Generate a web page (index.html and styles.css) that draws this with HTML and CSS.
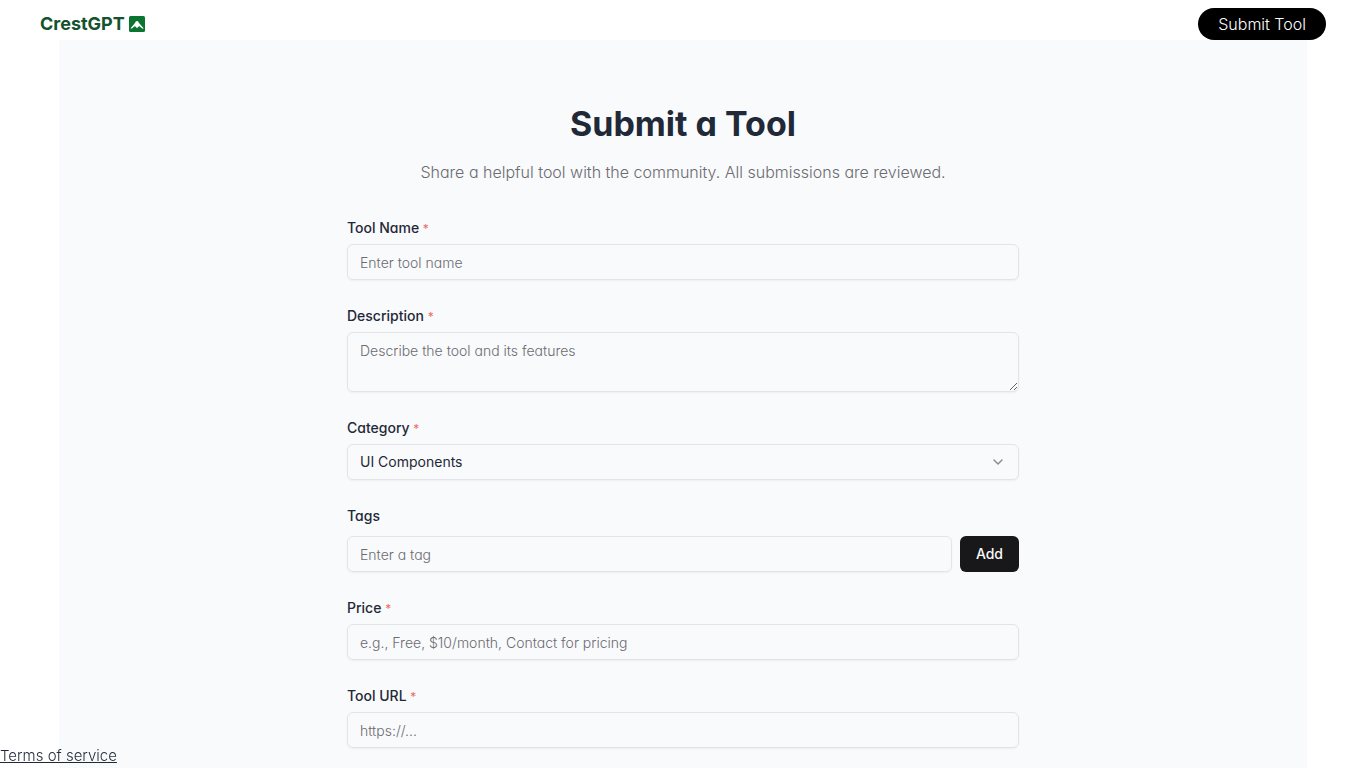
FILE: index.html
```html
<!DOCTYPE html>
<html lang="en">
<head>
<meta charset="utf-8">
<meta name="viewport" content="width=device-width, initial-scale=1">
<title>Submit a Tool - CrestGPT</title>
<link rel="stylesheet" href="styles.css">
</head>
<body>
<header class="site-header">
  <a class="brand" href="#">
    <span>CrestGPT</span>
    <svg class="brand-mark" viewBox="0 0 16 16" aria-hidden="true">
      <rect width="16" height="16" rx="1.5" fill="#0b7430"/>
      <path d="M1.4 12.6 6.4 6.4h3.2l5.2 6.2h-1.6l-2.7-2.4-1.2.6L8 12.2l-1.3-1.4-1.2-.6-2.5 2.4z" fill="#fff"/>
      <circle cx="8" cy="6.8" r="1.7" fill="#fff"/>
    </svg>
  </a>
  <a class="submit-link" href="#">Submit Tool</a>
</header>
<main class="page">
  <form class="tool-form">
    <div class="intro">
      <h1 class="title">Submit a Tool</h1>
      <p class="subtitle">Share a helpful tool with the community. All submissions are reviewed.</p>
    </div>
    <div class="field">
      <label class="label" for="name">Tool Name <span class="required">*</span></label>
      <input class="control" id="name" type="text" placeholder="Enter tool name">
    </div>
    <div class="field">
      <label class="label" for="description">Description <span class="required">*</span></label>
      <textarea class="control control-area" id="description" placeholder="Describe the tool and its features"></textarea>
    </div>
    <div class="field">
      <label class="label" for="category">Category <span class="required">*</span></label>
      <div class="select-box">
        <select class="control control-select" id="category"><option>UI Components</option></select>
        <svg class="chevron" viewBox="0 0 16 16" aria-hidden="true"><path d="m4 6 4 4 4-4" fill="none" stroke="#8b8d92" stroke-width="1.5" stroke-linecap="round" stroke-linejoin="round"/></svg>
      </div>
    </div>
    <div class="field field-tags">
      <label class="label" for="tag">Tags</label>
      <div class="tag-row">
        <input class="control" id="tag" type="text" placeholder="Enter a tag">
        <button class="add-button" type="button">Add</button>
      </div>
    </div>
    <div class="field">
      <label class="label" for="price">Price <span class="required">*</span></label>
      <input class="control" id="price" type="text" placeholder="e.g., Free, $10/month, Contact for pricing">
    </div>
    <div class="field">
      <label class="label" for="url">Tool URL <span class="required">*</span></label>
      <input class="control" id="url" type="url" placeholder="https://...">
    </div>
  </form>
</main>
<a class="terms" href="#">Terms of service</a>
</body>
</html>
```
FILE: styles.css
```css
* {
  box-sizing: border-box;
}

body {
  display: flex;
  flex-direction: column;
  min-height: 100vh;
  margin: 0;
  background: #fff;
  color: #1f2937;
  font-family: Inter, "Liberation Sans", sans-serif;
  font-size: 16px;
  font-weight: 300;
  line-height: 24px;
  font-feature-settings: "cv11";
}

.site-header {
  display: flex;
  align-items: flex-end;
  justify-content: space-between;
  height: 40px;
  padding: 0 40px;
}

.brand {
  display: flex;
  align-items: center;
  gap: 4px;
  height: 32px;
  color: #14532d;
  font-size: 18px;
  font-weight: 700;
  text-decoration: none;
}

.brand-mark {
  width: 16px;
  height: 16px;
}

.submit-link {
  padding: 4px 20px;
  border-radius: 16px;
  background: #000;
  color: #fff;
  text-decoration: none;
}

.page {
  flex: 1;
  width: calc(100% - 118px);
  max-width: 1248px;
  margin: 0 auto;
  padding: 64px 16px 20px;
  background: #f9fafc;
}

.tool-form {
  display: flex;
  flex-direction: column;
  gap: 24px;
  max-width: 672px;
  margin: 0 auto;
}

.intro {
  margin-bottom: 8px;
  text-align: center;
}

.title {
  margin: 0 0 16px;
  font-size: 34px;
  font-weight: 700;
  line-height: 40px;
}

.subtitle {
  margin: 0;
  color: #6b6b70;
}

.field {
  display: flex;
  flex-direction: column;
  gap: 4px;
}

.field-tags {
  gap: 8px;
}

.label {
  font-size: 14px;
  font-weight: 500;
  line-height: 24px;
}

.required {
  color: #ef6b5e;
  font-size: 12px;
  font-weight: 400;
  line-height: 20px;
}

.control {
  width: 100%;
  height: 36px;
  padding: 4px 12px;
  border: 1px solid #e2e4e8;
  border-radius: 6px;
  background: transparent;
  box-shadow: 0 1px 2px rgba(0, 0, 0, 0.05);
  color: #1f2937;
  font: inherit;
  font-size: 14px;
  line-height: 20px;
  font-feature-settings: inherit;
}

.control::placeholder {
  color: #6b6b70;
  opacity: 1;
}

.control-area {
  display: block;
  height: 60px;
  padding: 8px 12px;
  resize: vertical;
}

.select-box {
  display: grid;
  align-items: center;
}

.select-box > * {
  grid-area: 1 / 1;
}

.control-select {
  padding: 4px 8px 4px 12px;
  appearance: none;
  font-weight: 400;
}

.chevron {
  width: 16px;
  height: 16px;
  margin-right: 13px;
  justify-self: end;
  pointer-events: none;
}

.tag-row {
  display: flex;
  gap: 8px;
}

.add-button {
  padding: 8px 16px;
  border: 0;
  border-radius: 6px;
  background: #18181b;
  color: #fafafa;
  font: inherit;
  font-size: 14px;
  font-weight: 500;
  line-height: 20px;
}

.terms {
  position: fixed;
  bottom: 0;
  left: 0;
  color: #1f2937;
  font-size: 15px;
}
```
